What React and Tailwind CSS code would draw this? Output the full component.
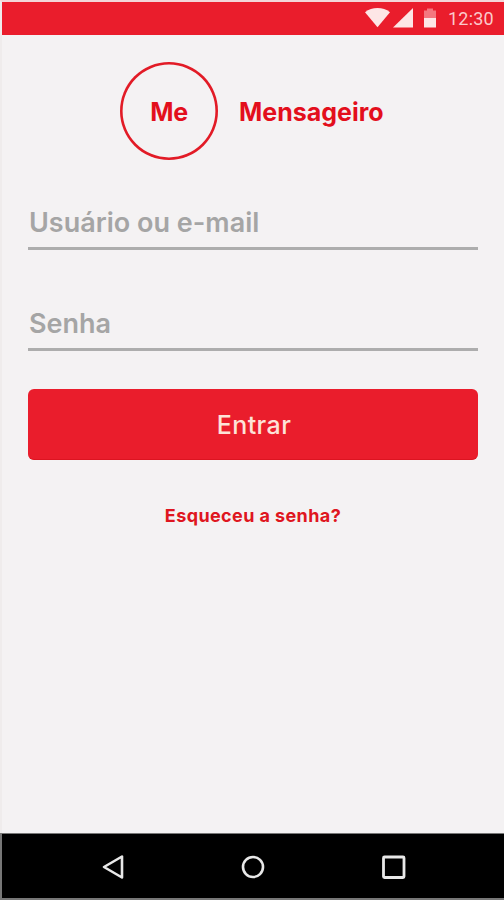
import { useState } from 'react';

function StatusBar() {
    return (
        <div className="flex h-[33px] items-center justify-end bg-[#ea1d2c] pr-[9px]">
            <svg className="h-5 w-[26px] overflow-visible" viewBox="0 0 26 20" fill="#fde6e6">
                <path d="M0 3.2C7-2.4 18-2.4 25 3.2L12.5 18.3Z" />
            </svg>
            <svg className="ml-[2px] h-5 w-5 overflow-visible" viewBox="0 0 20 20" fill="#fde6e6">
                <path d="M20 -1V18.5H0Z" />
            </svg>
            <svg className="ml-[11px] h-5 w-3 overflow-visible" viewBox="0 0 12 20">
                <path d="M3 -0.5H9V1.5H12V10H0V1.5H3Z" fill="#f4777f" />
                <path d="M0 9H12V18.5H0Z" fill="#fde6e6" />
            </svg>
            <span className="ml-3 w-[47px] whitespace-nowrap font-['Roboto',sans-serif] text-[18px] leading-5 tracking-[0.2px] text-[#fbc9cb]">
                12:30
            </span>
        </div>
    );
}

function Field({ type = 'text', label, value, onChange, className }) {
    return (
        <input
            type={type}
            placeholder={label}
            aria-label={label}
            value={value}
            onChange={(e) => onChange(e.target.value)}
            className={`block h-[50px] w-full border-b-[3px] border-[#adadad] bg-transparent pl-px pb-0.5 font-semibold text-[#555] outline-none placeholder:text-[#a5a5a5] placeholder:opacity-100 ${className}`}
        />
    );
}

function NavBar() {
    return (
        <div className="-ml-0.5 flex h-[67px] items-center border-b-2 border-l-2 border-t border-b-[#777] border-l-[#777] border-t-[#777] bg-black pl-[99px] pt-0.5">
            <svg className="h-7 w-6" viewBox="0 0 24 28" fill="none" stroke="#e8e8e8" strokeWidth="2.6" strokeLinejoin="round">
                <path d="M21 3.5V24.5L3 14Z" />
            </svg>
            <svg className="ml-[114px] h-7 w-7" viewBox="0 0 28 28" fill="none" stroke="#e8e8e8" strokeWidth="2.6">
                <circle cx="14" cy="14" r="10" />
            </svg>
            <svg className="ml-[112px] h-7 w-7" viewBox="0 0 28 28" fill="none" stroke="#e8e8e8" strokeWidth="2.8">
                <rect x="4.5" y="4" width="20.5" height="20.5" rx="1" />
            </svg>
        </div>
    );
}

export default function App() {
    const [user, setUser] = useState('');
    const [password, setPassword] = useState('');

    return (
        <div className="flex h-[900px] w-[504px] flex-col border-l-2 border-t-2 border-l-[#efecec] border-t-[#f3d6d8] bg-[#f4f2f3] font-['Inter',sans-serif]">
            <StatusBar />

            <main className="flex flex-1 flex-col pl-[26px] pr-[26px] pt-[27px]">
                <div className="flex h-[98px] items-center pl-[92px] font-bold text-[#e30f1c]">
                    <div className="flex h-[98px] w-[98px] items-center justify-center rounded-full pt-0.5 text-[25px] leading-8 tracking-[-0.4px] shadow-[inset_0_0_0_2.6px_#e21b26]">
                        Me
                    </div>
                    <h1 className="ml-[21px] whitespace-nowrap pt-0.5 text-[25px] leading-8">Mensageiro</h1>
                </div>

                <form onSubmit={(e) => e.preventDefault()} className="mt-[40px]">
                    <Field
                        label="Usuário ou e-mail"
                        value={user}
                        onChange={setUser}
                        className="text-[27px]"
                    />
                    <Field
                        type="password"
                        label="Senha"
                        value={password}
                        onChange={setPassword}
                        className="mt-[51px] text-[27px]"
                    />
                    <button
                        type="submit"
                        className="mt-[38px] block h-[71px] w-full rounded-[6px] border-b border-[#dc1421] bg-[#ea1d2c] pl-0.5 pt-[3px] text-[25px] font-medium tracking-[0.4px] text-[#fde3d8]"
                    >
                        Entrar
                    </button>
                </form>

                <a href="#" className="mt-[44px] self-center whitespace-nowrap text-[18px] font-bold leading-6 tracking-[0.4px] text-[#df1620]">
                    Esqueceu a senha?
                </a>
            </main>

            <NavBar />
        </div>
    );
}
